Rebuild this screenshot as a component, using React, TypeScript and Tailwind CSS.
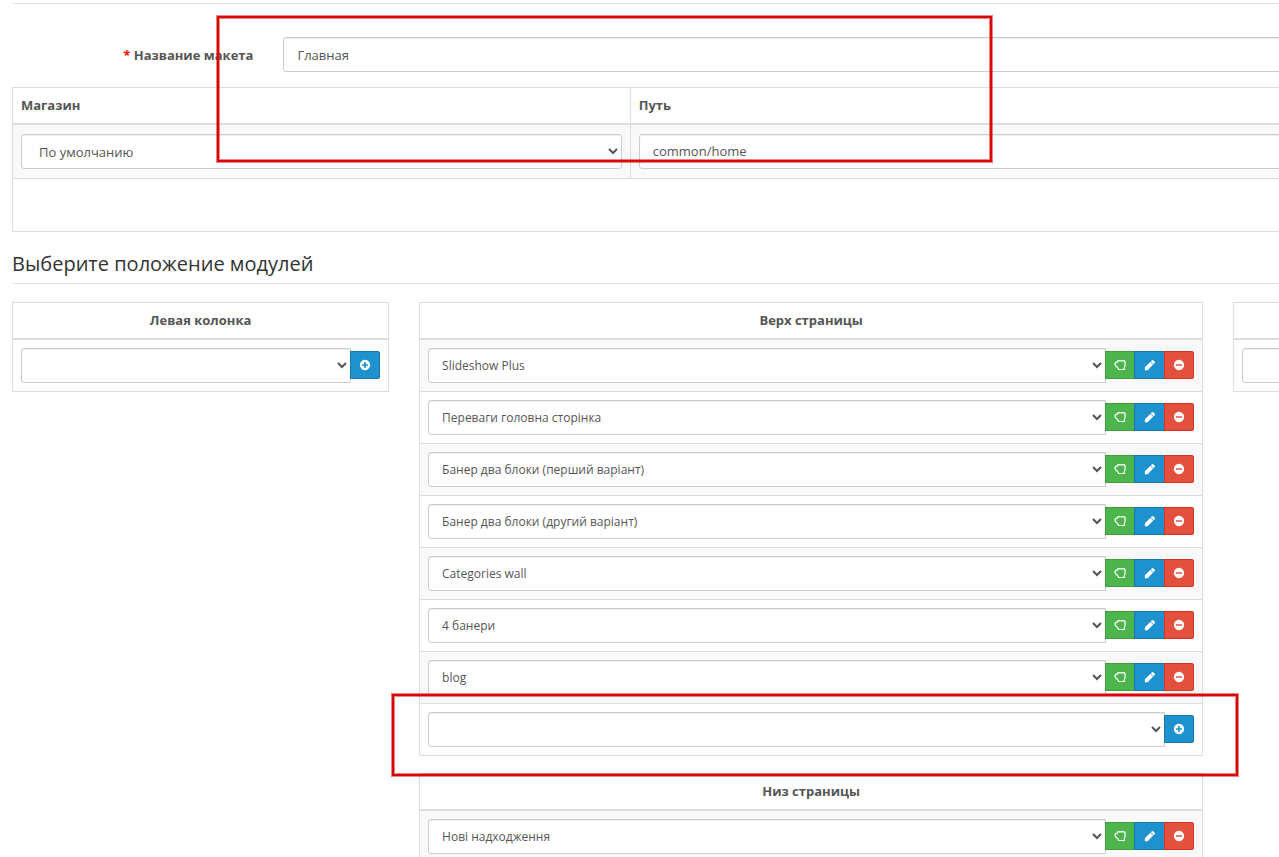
import type { ReactNode } from "react";

const DISC =
  "M1664 896q0 209-103 385.5t-279.5 279.5-385.5 103-385.5-103-279.5-279.5-103-385.5 103-385.5 279.5-279.5 385.5-103 385.5 103 279.5 279.5 103 385.5z";
const PLUS =
  "M1344 960v-128q0-26-19-45t-45-19h-256v-256q0-26-19-45t-45-19h-128q-26 0-45 19t-19 45v256h-256q-26 0-45 19t-19 45v128q0 26 19 45t45 19h256v256q0 26 19 45t45 19h128q26 0 45-19t19-45v-256h256q26 0 45-19t19-45z";
const MINUS =
  "M1344 960v-128q0-26-19-45t-45-19h-768q-26 0-45 19t-19 45v128q0 26 19 45t45 19h768q26 0 45-19t19-45z";
const PENCIL =
  "M960 416l416 416-832 832h-340q-76 0-76-76v-340zm683 96q0 53-37 90l-166 166-416-416 166-165q36-38 90-38 53 0 91 38l235 234q37 39 37 91z";

function Glyph({ d }: { d: string }) {
  return (
    <svg viewBox="0 0 1792 1792" className="size-3" fill="currentColor" fillRule="evenodd" aria-hidden="true">
      <path d={d} />
    </svg>
  );
}

function Fist() {
  return (
    <svg viewBox="0 0 12 12" className="size-3" fill="none" stroke="currentColor" strokeLinejoin="round" aria-hidden="true">
      <path
        strokeWidth="1.2"
        d="M3.2 3C3.2 2 3.8 1.6 4.6 1.6h4.5c1.2 0 2 .7 2 1.8v2.7c0 1.1-.8 1.8-.8 2.9v1.5H4.4V9.4C3.9 8.5 1 7.3 1 5c0-1.3.9-2 2.2-2z"
      />
      <path strokeWidth="0.6" d="M5 1.6v1.4M7 1.6v1.4M9 1.6v1.4M3.2 3v1.4" />
    </svg>
  );
}

const field =
  "block h-[35px] border border-[#ccc] bg-white text-[#555] shadow-[inset_0_1px_1px_rgba(0,0,0,0.075)]";

const tones = {
  green: "w-[30px] bg-[#4cb64c] border-[#409e40]",
  edit: "-ml-px w-[31px] bg-[#1e91cf] border-[#1978ab]",
  red: "-ml-px w-[30px] rounded-r-[2px] bg-[#e4503e] border-[#d9331f]",
  add: "w-[30px] rounded-r-[2px] bg-[#1e91cf] border-[#1978ab]",
};

function IconButton({ tone, label, children }: { tone: keyof typeof tones; label: string; children: ReactNode }) {
  return (
    <button
      type="button"
      aria-label={label}
      className={`flex h-7 items-center justify-center border text-white ${tones[tone]}`}
    >
      {children}
    </button>
  );
}

function ModuleRow({ name, striped = false }: { name?: string; striped?: boolean }) {
  return (
    <tr className={striped ? "bg-[#f9f9f9]" : "bg-white"}>
      <td className="border-b border-[#ddd] p-2">
        <div className="flex items-start">
          <select
            aria-label={name ?? "Модуль"}
            className={`${field} -mr-px min-w-0 flex-1 rounded-l-[3px] pl-[9px] text-[12px]`}
          >
            <option>{name ?? ""}</option>
          </select>
          <div className="relative flex pt-[3px]">
            {name ? (
              <>
                <IconButton tone="green" label="Переместить">
                  <Fist />
                </IconButton>
                <IconButton tone="edit" label="Редактировать">
                  <Glyph d={PENCIL} />
                </IconButton>
                <IconButton tone="red" label="Удалить">
                  <Glyph d={DISC + MINUS} />
                </IconButton>
              </>
            ) : (
              <IconButton tone="add" label="Добавить">
                <Glyph d={DISC + PLUS} />
              </IconButton>
            )}
          </div>
        </div>
      </td>
    </tr>
  );
}

function ModuleTable({ title, modules = [] }: { title?: string; modules?: string[] }) {
  return (
    <table className="mb-[17px] w-full border-separate border-spacing-0 border-x border-t border-[#ddd]">
      <thead>
        <tr>
          <th className="h-[37px] border-b-2 border-[#ddd] px-2 pb-0.5 text-center font-bold">{title}</th>
        </tr>
      </thead>
      <tbody>
        {modules.map((name, i) => (
          <ModuleRow key={name} name={name} striped={i % 2 === 0} />
        ))}
        <ModuleRow />
      </tbody>
    </table>
  );
}

const topModules = [
  "Slideshow Plus",
  "Переваги головна сторінка",
  "Банер два блоки (перший варіант)",
  "Банер два блоки (другий варіант)",
  "Categories wall",
  "4 банери",
  "blog",
];

const marker =
  "pointer-events-none absolute border-2 border-[#d90808] shadow-[0_0_0_1px_rgba(217,8,8,0.5),inset_0_0_0_1px_rgba(217,8,8,0.5)]";

export default function App() {
  return (
    <div className="relative h-screen overflow-hidden bg-white font-['Open_Sans',sans-serif] text-[13px] leading-5 text-[#555]">
      <form className="w-[125.9%] pt-[3px] pl-3">
        <hr className="border-[#e5e5e5]" />
        <div className="mt-[33px] grid grid-cols-12 items-center gap-x-[30px]">
          <label htmlFor="name" className="col-span-2 text-right font-bold">
            <span className="text-[#f00]">*</span> Название макета
          </label>
          <input id="name" defaultValue="Главная" className={`${field} col-span-10 rounded-[3px] px-[13px]`} />
        </div>

        <table className="mt-[15px] w-full table-fixed border-separate border-spacing-0 border-x border-t border-[#ddd]">
          <thead>
            <tr className="text-left">
              <th className="h-[37px] w-[38.7%] border-r border-b-2 border-[#ddd] px-2 pb-0.5 font-bold">Магазин</th>
              <th className="border-b-2 border-[#ddd] px-2 pb-0.5 font-bold">Путь</th>
            </tr>
          </thead>
          <tbody>
            <tr className="bg-[#f9f9f9]">
              <td className="border-r border-b border-[#ddd] px-2 py-[9px]">
                <select aria-label="Магазин" className={`${field} w-full rounded-[3px] pl-[13px]`}>
                  <option>По умолчанию</option>
                </select>
              </td>
              <td className="border-b border-[#ddd] px-2 py-[9px]">
                <input
                  aria-label="Путь"
                  defaultValue="common/home"
                  className={`${field} w-full rounded-[3px] px-[13px] pb-0.5`}
                />
              </td>
            </tr>
            <tr>
              <td colSpan={2} className="h-[53px] border-b border-[#ddd]" />
            </tr>
          </tbody>
        </table>

        <h2 className="mt-[18px] border-b border-[#e5e5e5] pb-[5px] text-[20px] leading-7 text-[#333]">
          Выберите положение модулей
        </h2>

        <div className="mt-[18px] grid grid-cols-12 items-start gap-x-[30px]">
          <div className="col-span-3">
            <ModuleTable title="Левая колонка" />
          </div>
          <div className="col-span-6">
            <ModuleTable title="Верх страницы" modules={topModules} />
            <ModuleTable title="Низ страницы" modules={["Нові надходження"]} />
          </div>
          <div className="col-span-3">
            <ModuleTable />
          </div>
        </div>
      </form>

      <div className={`${marker} top-4 left-[217px] h-[146px] w-[775px]`} />
      <div className={`${marker} top-[694px] left-[392px] h-[82px] w-[846px]`} />
    </div>
  );
}
